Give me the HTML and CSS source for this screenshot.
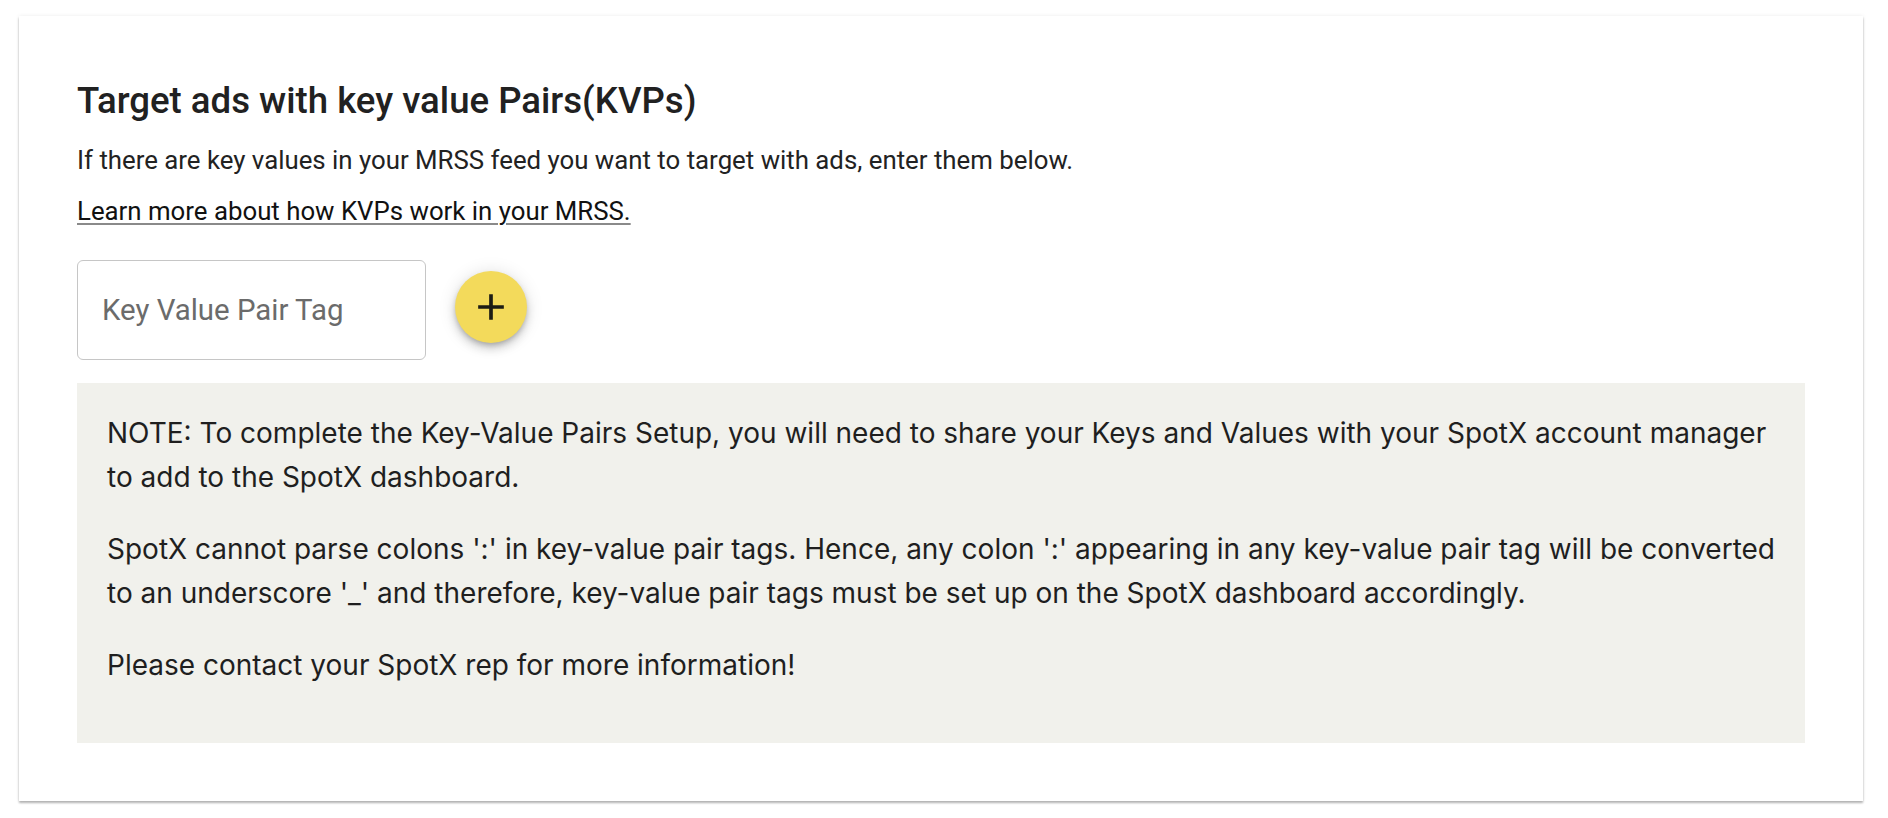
FILE: index.html
```html
<!DOCTYPE html>
<html lang="en">

<head>
  <meta charset="utf-8">
  <title>KVP targeting</title>

  <link rel="stylesheet" href="styles.css">
</head>

<body>
  <div class="page">
    <div class="card">
      <h2 class="title">Target ads with key value Pairs(KVPs)</h2>
      <p class="lead">If there are key values in your MRSS feed you want to target with ads, enter them below.</p>
      <p class="lead more"><a href="#" class="learn">Learn more about how KVPs work in your MRSS.</a></p>

      <div class="kvp-row">
        <input type="text" class="kvp-input" placeholder="Key Value Pair Tag">
        <button class="fab" title="Add">
          <svg viewBox="0 0 24 24" width="44" height="44">
            <path d="M19 13h-6v6h-2v-6H5v-2h6V5h2v6h6v2z" fill="currentColor"/>
          </svg>
        </button>
      </div>

      <div class="note">
        <p>NOTE: To complete the Key-Value Pairs Setup, you will need to share your Keys and Values with your SpotX account manager to add to the SpotX dashboard.</p>
        <p>SpotX cannot parse colons ':' in key-value pair tags. Hence, any colon ':' appearing in any key-value pair tag will be converted to an underscore '_' and therefore, key-value pair tags must be set up on the SpotX dashboard accordingly.</p>
        <p>Please contact your SpotX rep for more information!</p>
      </div>
    </div>
  </div>
</body>

</html>
```

FILE: styles.css
```css
body {
  margin: 0;
  background: #fff;
  font-family: Roboto, "Liberation Sans", sans-serif;
  color: #212121;
}

.page {
  padding: 16px 25px 18px 19px;
}

.card {
  background: #fff;
  padding: 63px 58px 58px;
  box-shadow: 0 2px 2px rgba(0, 0, 0, .28), 0 0 4px rgba(0, 0, 0, .08);
}

.title {
  margin: 0 0 19px;
  font-size: 36.6px;
  line-height: 44px;
  font-weight: 500;
  color: #212121;
}

.lead {
  margin: 0;
  font-size: 25.8px;
  line-height: 36px;
  color: #222;
}

.more {
  margin-top: 15px;
}

.learn {
  color: #111;
  text-decoration: underline;
  text-decoration-color: #8a8a8a;
  text-decoration-thickness: 2px;
  text-underline-offset: 3px;
}

.kvp-row {
  display: flex;
  align-items: center;
  gap: 29px;
  margin-top: 31px;
}

.kvp-input {
  box-sizing: border-box;
  width: 349px;
  height: 100px;
  padding: 0 24px;
  border: 1px solid #c6c6c6;
  border-radius: 6px;
  font-family: Roboto, "Liberation Sans", sans-serif;
  font-size: 29.4px;
  color: #222;
  outline: none;
}

.kvp-input::placeholder {
  color: #6b6b6b;
}

.fab {
  width: 72px;
  height: 72px;
  margin-bottom: 7px;
  padding: 0;
  border: none;
  border-radius: 50%;
  background: #f3da5b;
  color: #1c1c14;
  display: flex;
  align-items: center;
  justify-content: center;
  cursor: pointer;
  box-shadow: 0 3px 5px -1px rgba(0, 0, 0, .2), 0 6px 10px 0 rgba(0, 0, 0, .14), 0 1px 18px 0 rgba(0, 0, 0, .12);
}

.note {
  margin-top: 23px;
  padding: 28px 30px;
  background: #f1f1ec;
  font-family: Inter, "Noto Sans", sans-serif;
  font-size: 28px;
  line-height: 44px;
  color: #1f1f1f;
}

.note p {
  margin: 0 0 28px;
}
```
